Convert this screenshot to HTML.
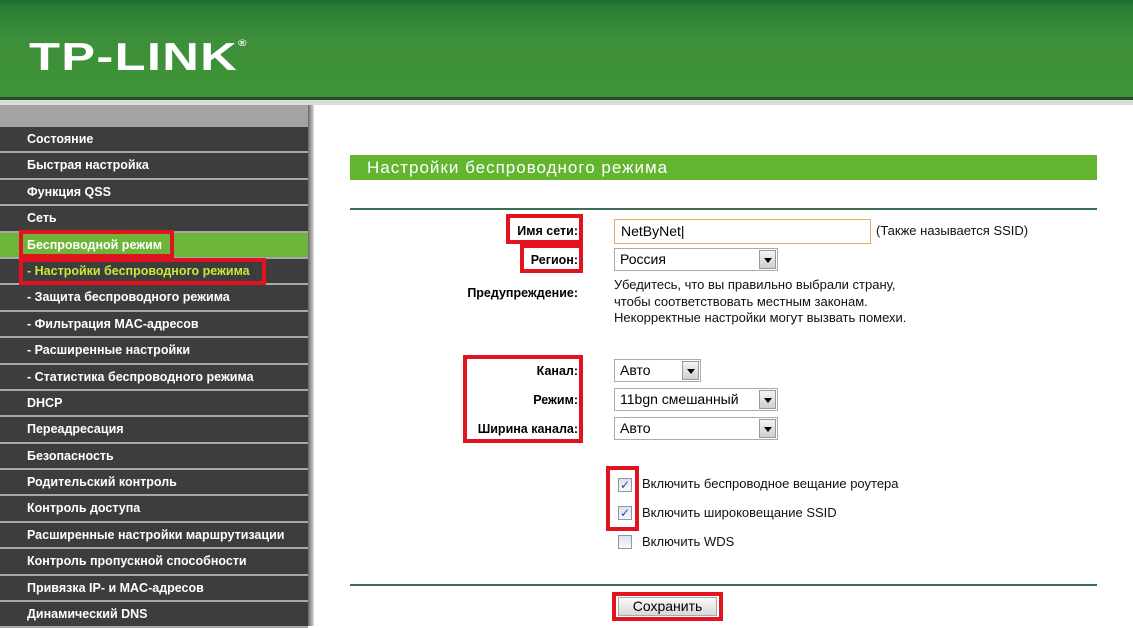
<!DOCTYPE html>
<html><head><meta charset="utf-8"><style>
*{margin:0;padding:0;box-sizing:border-box}
body{width:1133px;height:626px;overflow:hidden;background:#fff;font-family:"Liberation Sans",Arial,sans-serif;position:relative}
#hdr{position:absolute;left:0;top:0;width:1133px;height:97px;background:linear-gradient(#1d6b34 0,#2a7d36 8px,#3d8f3a 40px,#3f9437 97px)}
#hdr .logo{position:absolute;left:29px;top:36px;color:#fff;font-weight:bold;font-size:39px;letter-spacing:1px;transform:scaleX(1.3);transform-origin:left;font-family:"Liberation Sans",sans-serif}
#hdr .logo sup{font-size:9px;vertical-align:top;position:relative;top:2px;letter-spacing:0}
#l1{position:absolute;top:97px;left:0;width:1133px;height:3px;background:#2b4a2b}
#l2{position:absolute;top:100px;left:0;width:1133px;height:5px;background:#d8ddd8}
#side{position:absolute;left:0;top:105px;width:308px;height:521px;background:#a0a0a0}
#side .top{height:22px;background:#a3a3a3}
#side .it{height:26.4px;background:#3d3d3d;border-bottom:2px solid #a8a8a8;color:#fff;font-size:12.5px;font-weight:bold;line-height:24px;padding-left:27px;white-space:nowrap}
#side .it.g{background:#6db43a}
#side .it.y{color:#c9e83a}
#div{position:absolute;left:308px;top:105px;width:6px;height:521px;background:linear-gradient(90deg,#666,#ddd)}
.tb{position:absolute;left:350px;top:155px;width:747px;height:25px;background:#63b530;color:#fff;font-size:17px;letter-spacing:1px;line-height:25px;padding-left:17px}
.hl{position:absolute;left:350px;width:747px;height:2px;background:#3b6e52}
.lab{position:absolute;right:555px;font-size:12.5px;font-weight:bold;color:#000;text-align:right;white-space:nowrap}
.txt{position:absolute;font-size:13px;color:#111;white-space:nowrap}
.sel{position:absolute;height:23px;border:1px solid #aaa;background:#fff;font-size:14px;line-height:21px;padding-left:5px;color:#000}
.sel i{position:absolute;right:1px;top:1px;width:17px;height:19px;background:linear-gradient(#f4f4f4,#cfcfcf);border:1px solid #999}
.sel i:after{content:"";position:absolute;left:4px;top:7px;border-left:4px solid transparent;border-right:4px solid transparent;border-top:5px solid #000}
.red{position:absolute;border:4px solid #e0131f}
.cb{position:absolute;left:618px;width:14px;height:14px;border:1px solid #8899aa;background:linear-gradient(#dde3ee,#f6f7fa);font-size:12px;line-height:12px;text-align:center;color:#2a4aa0}
</style></head><body>
<div id="hdr"><div class="logo">TP-LINK<sup>®</sup></div></div>
<div id="l1"></div><div id="l2"></div>
<div id="side"><div class="top"></div>
<div class="it">Состояние</div>
<div class="it">Быстрая настройка</div>
<div class="it">Функция QSS</div>
<div class="it">Сеть</div>
<div class="it g">Беспроводной режим</div>
<div class="it y">- Настройки беспроводного режима</div>
<div class="it">- Защита беспроводного режима</div>
<div class="it">- Фильтрация MAC-адресов</div>
<div class="it">- Расширенные настройки</div>
<div class="it">- Статистика беспроводного режима</div>
<div class="it">DHCP</div>
<div class="it">Переадресация</div>
<div class="it">Безопасность</div>
<div class="it">Родительский контроль</div>
<div class="it">Контроль доступа</div>
<div class="it">Расширенные настройки маршрутизации</div>
<div class="it">Контроль пропускной способности</div>
<div class="it">Привязка IP- и MAC-адресов</div>
<div class="it">Динамический DNS</div>
</div>
<div id="div"></div>
<div class="red" style="left:19px;top:230px;width:155px;height:28px"></div>
<div class="red" style="left:19px;top:258px;width:247px;height:27px"></div>

<div class="tb">Настройки беспроводного режима</div>
<div class="hl" style="top:208px"></div>
<div class="hl" style="top:584px"></div>

<div class="lab" style="top:224px">Имя сети:</div>
<div class="lab" style="top:253px">Регион:</div>
<div class="lab" style="top:286px">Предупреждение:</div>
<div class="lab" style="top:364px">Канал:</div>
<div class="lab" style="top:393px">Режим:</div>
<div class="lab" style="top:422px">Ширина канала:</div>
<div class="red" style="left:506px;top:214px;width:77px;height:30px"></div>
<div class="red" style="left:520px;top:244px;width:63px;height:29px"></div>
<div class="red" style="left:463px;top:355px;width:120px;height:88px"></div>

<div style="position:absolute;left:614px;top:219px;width:257px;height:25px;border:1px solid #e0b060;font-size:14px;line-height:23px;padding-left:6px">NetByNet|</div>
<div class="txt" style="left:876px;top:223px">(Также называется SSID)</div>
<div class="sel" style="left:614px;top:248px;width:164px">Россия<i></i></div>
<div class="txt" style="left:614px;top:277px;line-height:16.5px">Убедитесь, что вы правильно выбрали страну,<br>чтобы соответствовать местным законам.<br>Некорректные настройки могут вызвать помехи.</div>
<div class="sel" style="left:614px;top:359px;width:87px">Авто<i></i></div>
<div class="sel" style="left:614px;top:388px;width:164px">11bgn смешанный<i></i></div>
<div class="sel" style="left:614px;top:417px;width:164px">Авто<i></i></div>

<div class="red" style="left:606px;top:466px;width:33px;height:65px"></div>
<div class="cb" style="top:478px">✓</div>
<div class="cb" style="top:506px">✓</div>
<div class="cb" style="top:535px"></div>
<div class="txt" style="left:642px;top:476px">Включить беспроводное вещание роутера</div>
<div class="txt" style="left:642px;top:505px">Включить широковещание SSID</div>
<div class="txt" style="left:642px;top:534px">Включить WDS</div>

<div class="red" style="left:612px;top:592px;width:111px;height:29px"></div>
<div style="position:absolute;left:618px;top:597px;width:99px;height:19px;background:linear-gradient(#fafafa,#d8d8d8);border:1px solid #aaa;font-size:14px;line-height:17px;text-align:center">Сохранить</div>
</body></html>
